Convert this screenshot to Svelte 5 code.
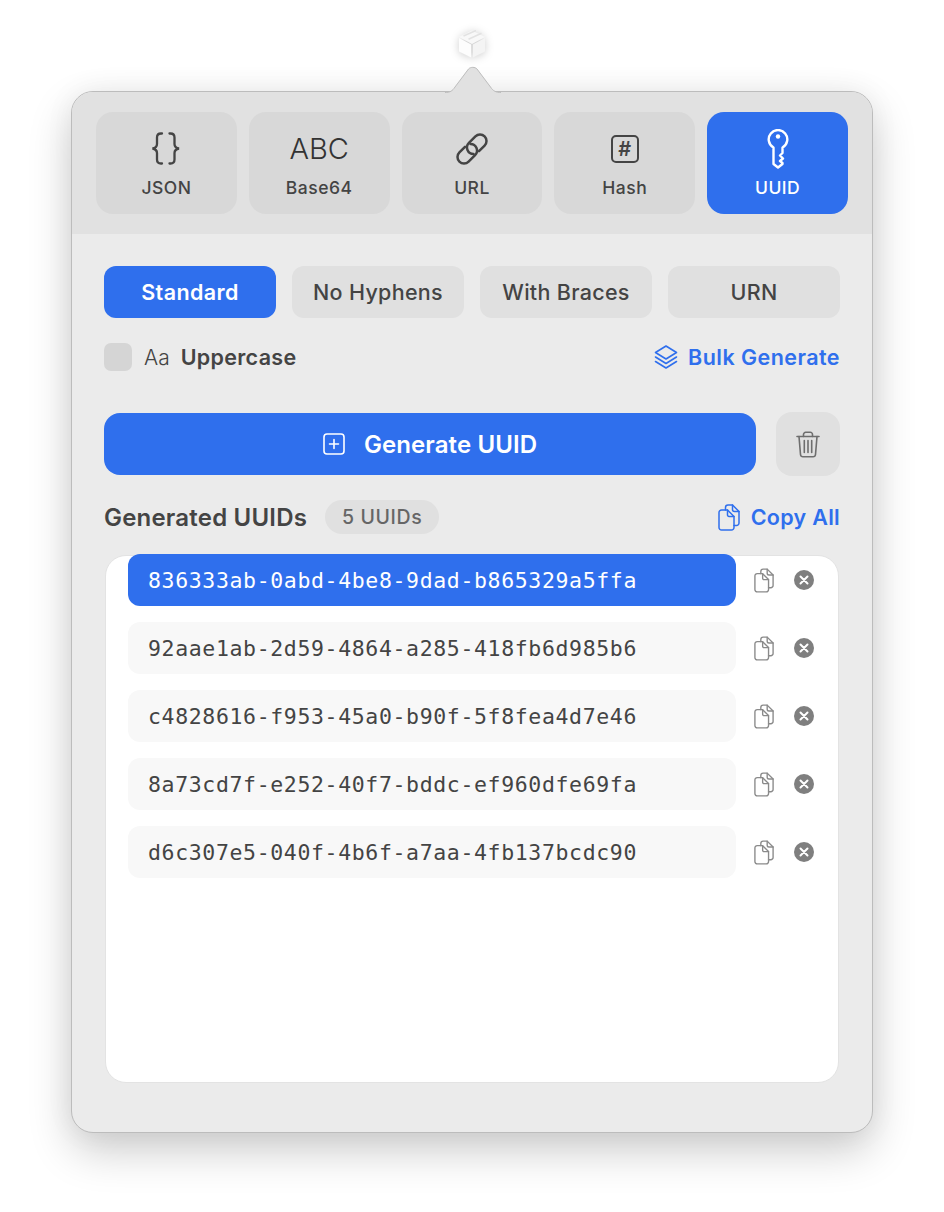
<script>
  const tabs = ['JSON', 'Base64', 'URL', 'Hash', 'UUID'];
  const formats = ['Standard', 'No Hyphens', 'With Braces', 'URN'];
  const uuids = [
    '836333ab-0abd-4be8-9dad-b865329a5ffa',
    '92aae1ab-2d59-4864-a285-418fb6d985b6',
    'c4828616-f953-45a0-b90f-5f8fea4d7e46',
    '8a73cd7f-e252-40f7-bddc-ef960dfe69fa',
    'd6c307e5-040f-4b6f-a7aa-4fb137bcdc90'
  ];
  let activeTab = 'UUID';
  let activeFormat = 'Standard';
  let selected = 0;
</script>

{#snippet copyIcon()}
  <svg class="copy-svg" viewBox="0 0 22 27" fill="none" stroke="currentColor" stroke-width="1.5" stroke-linejoin="round" stroke-linecap="round">
    <path d="M7.5 6V3.5A2.5 2.5 0 0 1 10 1h4.5L21 7.5V19a2.5 2.5 0 0 1-2.5 2.5H16" />
    <path d="M14.5 1v4.5a2 2 0 0 0 2 2H21" />
    <path d="M3.5 6h6L16 12.5v11a2.5 2.5 0 0 1-2.5 2.5h-10A2.5 2.5 0 0 1 1 23.5v-15A2.5 2.5 0 0 1 3.5 6Z" />
    <path d="M9.5 6v5a1.5 1.5 0 0 0 1.5 1.5h5" />
  </svg>
{/snippet}

<div class="page">
  <svg class="menu-icon" viewBox="0 0 28 28">
    <path d="M14 .5 27 7 14 14 1 7Z" fill="#f8f8f8" />
    <path d="M1 8 13.2 14.600V27.500L1 21.500Z" fill="#fdfdfd" />
    <path d="M27 8 14.800 14.600V27.500L27 21.500Z" fill="#f4f4f4" />
    <path d="M5.500 6 18 0.500M10.500 9.300 23.500 3.300" stroke="#e2e2e2" stroke-width="1.500" fill="none" />
  </svg>

  <div class="popover">
    <svg class="tail" viewBox="0 0 56 28">
      <path d="M0 26.500C5 26.500 7.500 25 10 21L23.500 3C25.500 .8 30 .8 32 3L45.500 21C48 25 51 26.500 56 26.500V28H0Z" fill="#e1e1e1" />
      <path d="M0 26.500C5 26.500 7.500 25 10 21L23.500 3C25.500 .8 30 .8 32 3L45.500 21C48 25 51 26.500 56 26.500" fill="none" stroke="#bdbdbd" stroke-width="1" />
    </svg>

    <div class="tabs">
      {#each tabs as tab}
        <div class="tab" class:active={tab === activeTab}>
          <div class="tab-icon">
            {#if tab === 'JSON'}
              <svg width="32" height="33" viewBox="0 0 32 33" fill="none" stroke="#444" stroke-width="2.3" stroke-linecap="round">
                <path d="M12 1.500h-1c-2.600 0-4 1.400-4 4v6.500c0 2.400-1.400 3.900-4.500 4.500 3.100.6 4.500 2.100 4.500 4.500v6.500c0 2.600 1.400 4 4 4h1" />
                <path d="M19.500 1.500h1c2.600 0 4 1.400 4 4v6.500c0 2.400 1.400 3.900 4.500 4.500-3.100.6-4.500 2.100-4.500 4.500v6.500c0 2.600-1.400 4-4 4h-1" />
              </svg>
            {:else if tab === 'Base64'}
              <span class="abc">ABC</span>
            {:else if tab === 'URL'}
              <svg width="34" height="34" viewBox="0 0 34 34" fill="none" stroke="#444" stroke-width="2.500" stroke-linecap="round">
                <path d="M24 19.200 29.600 13.600A6.500 6.500 0 0 0 20.400 4.400L13.900 10.900A6.500 6.500 0 0 0 18.500 22" />
                <path d="M10 14.800 4.400 20.400A6.500 6.500 0 0 0 13.600 29.600L20.100 23.100A6.500 6.500 0 0 0 15.500 12" />
              </svg>
            {:else if tab === 'Hash'}
              <span class="hash-box">#</span>
            {:else}
              <svg width="22" height="40" viewBox="0 0 22 40" fill="none" stroke="#fff" stroke-width="2.400" stroke-linejoin="round">
                <path d="M6.500 18.500A9.300 9.300 0 1 1 15.500 18.500V24L13 26.500 16 29.500 13 32 15.500 34V35L11 38.500 6.500 35Z" />
                <circle cx="11" cy="7.500" r="2.200" fill="#fff" stroke="none" />
              </svg>
            {/if}
          </div>
          <span class="tab-label">{tab}</span>
        </div>
      {/each}
    </div>

    <div class="content">
      <div class="formats">
        {#each formats as format}
          <div class="format" class:active={format === activeFormat}>{format}</div>
        {/each}
      </div>

      <div class="options">
        <div class="uppercase">
          <span class="checkbox"></span>
          <span class="aa">Aa</span>
          <span class="uppercase-label">Uppercase</span>
        </div>
        <div class="link-btn">
          <svg width="24" height="24" viewBox="0 0 24 24" fill="none" stroke="currentColor" stroke-width="1.600" stroke-linejoin="round" stroke-linecap="round">
            <path d="M12 1 22.500 7.500 12 14 1.500 7.500Z" />
            <path d="M1.500 12 12 18.500 22.500 12" />
            <path d="M1.500 16.500 12 23 22.500 16.500" />
          </svg>
          Bulk Generate
        </div>
      </div>

      <div class="actions">
        <div class="generate">
          <svg width="22" height="22" viewBox="0 0 22 22" fill="none" stroke="#fff" stroke-width="1.600" stroke-linecap="round">
            <rect x="1" y="1" width="20" height="20" rx="3" />
            <path d="M11 6.500v9M6.500 11h9" />
          </svg>
          Generate UUID
        </div>
        <div class="trash">
          <svg width="24" height="27" viewBox="0 0 24 27" fill="none" stroke="#6e6e6e" stroke-width="1.600" stroke-linecap="round" stroke-linejoin="round">
            <path d="M1 5.500h22" />
            <path d="M7.500 5.500V3.500A2.200 2.200 0 0 1 9.700 1.300h4.600a2.200 2.200 0 0 1 2.200 2.200v2" />
            <path d="M3 5.500 4.500 23.500A2.500 2.500 0 0 0 7 25.800h10a2.500 2.500 0 0 0 2.500-2.300L21 5.500" />
            <path d="M8.300 9.500v12M12 9.500v12M15.700 9.500v12" />
          </svg>
        </div>
      </div>

      <div class="list-header">
        <div class="list-title">
          <span class="title-text">Generated UUIDs</span>
          <span class="count">{uuids.length} UUIDs</span>
        </div>
        <div class="link-btn copy-all">
          {@render copyIcon()}
          Copy All
        </div>
      </div>

      <div class="list">
        {#each uuids as uuid, i}
          <div class="row">
            <div class="uuid" class:selected={i === selected}>{uuid}</div>
            <span class="row-copy">{@render copyIcon()}</span>
            <span class="row-remove">
              <svg width="20" height="20" viewBox="0 0 20 20">
                <circle cx="10" cy="10" r="10" fill="#7f7f7f" />
                <path d="M6.500 6.500l7 7M13.500 6.500l-7 7" stroke="#fff" stroke-width="2" stroke-linecap="round" />
              </svg>
            </span>
          </div>
        {/each}
      </div>
    </div>
  </div>
</div>

<style>
  :global(body) {
    margin: 0;
    background: #fff;
  }

  .page {
    height: 1212px;
    padding-top: 30px;
    box-sizing: border-box;
    display: flex;
    flex-direction: column;
    align-items: center;
    font-family: Inter, 'Noto Sans', sans-serif;
    color: #444;
    overflow: hidden;
  }

  .menu-icon {
    width: 28px;
    height: 28px;
    margin-bottom: 33px;
    filter: drop-shadow(0 1px 4px rgba(0, 0, 0, 0.2));
  }

  .popover {
    position: relative;
    width: 802px;
    height: 1042px;
    box-sizing: border-box;
    background: #ebebeb;
    border: 1px solid #bcbcbc;
    border-radius: 22px;
    box-shadow: 0 18px 44px rgba(0, 0, 0, 0.2), 0 0 30px rgba(0, 0, 0, 0.05);
  }

  .tail {
    position: absolute;
    top: -26px;
    left: 373px;
    width: 56px;
    height: 28px;
  }

  .tabs {
    display: grid;
    grid-template-columns: repeat(5, 1fr);
    gap: 12px;
    padding: 20px 24px;
    background: #e1e1e1;
    border-radius: 21px 21px 0 0;
  }

  .tab {
    height: 102px;
    box-sizing: border-box;
    background: #d8d8d8;
    border-radius: 17px;
    display: flex;
    flex-direction: column;
    align-items: center;
  }

  .tab.active {
    background: #2f6fed;
    color: #fff;
  }

  .tab-icon {
    height: 65px;
    display: flex;
    align-items: center;
    justify-content: center;
    padding-top: 8px;
    box-sizing: border-box;
  }

  .abc {
    font-size: 29px;
    font-weight: 300;
    color: #333;
  }

  .hash-box {
    width: 24px;
    height: 24px;
    border: 2.400px solid #444;
    border-radius: 5px;
    display: flex;
    align-items: center;
    justify-content: center;
    font-size: 20px;
    font-weight: 600;
  }

  .tab-label {
    font-size: 17.500px;
    font-weight: 500;
    letter-spacing: 0.5px;
  }

  .content {
    padding: 32px 32px 0;
  }

  .formats {
    display: grid;
    grid-template-columns: repeat(4, 1fr);
    gap: 16px;
  }

  .format {
    height: 52px;
    background: #e0e0e0;
    border-radius: 12px;
    display: flex;
    align-items: center;
    justify-content: center;
    font-size: 21.500px;
    font-weight: 500;
    letter-spacing: 0.3px;
  }

  .format.active {
    background: #2f6fed;
    color: #fff;
    font-weight: 600;
    letter-spacing: 0.4px;
  }

  .options {
    display: flex;
    align-items: center;
    justify-content: space-between;
    margin-top: 25px;
    height: 28px;
  }

  .uppercase {
    display: flex;
    align-items: center;
  }

  .checkbox {
    width: 28px;
    height: 28px;
    border-radius: 7px;
    background: #d5d5d5;
    margin-right: 12px;
  }

  .aa {
    font-size: 21px;
    font-weight: 300;
    margin-right: 11px;
  }

  .uppercase-label {
    font-size: 21.500px;
    font-weight: 600;
    letter-spacing: 0.3px;
  }

  .link-btn {
    display: flex;
    align-items: center;
    gap: 10px;
    color: #2f6fed;
    font-size: 21.500px;
    font-weight: 600;
    letter-spacing: 0.45px;
  }

  .copy-all {
    gap: 11px;
    letter-spacing: 0.3px;
  }

  .actions {
    display: flex;
    gap: 20px;
    align-items: center;
    margin-top: 41px;
  }

  .generate {
    flex: 1;
    height: 62px;
    background: #2f6fed;
    border-radius: 16px;
    display: flex;
    align-items: center;
    justify-content: center;
    gap: 19px;
    color: #fff;
    font-size: 24px;
    font-weight: 600;
    letter-spacing: 0.1px;
  }

  .trash {
    width: 64px;
    height: 64px;
    background: #e0e0e0;
    border-radius: 16px;
    display: flex;
    align-items: center;
    justify-content: center;
  }

  .list-header {
    display: flex;
    align-items: center;
    justify-content: space-between;
    margin-top: 24px;
    height: 34px;
  }

  .list-title {
    display: flex;
    align-items: center;
    gap: 18px;
    font-size: 24px;
    font-weight: 600;
  }

  .title-text {
    letter-spacing: 0.2px;
  }

  .count {
    height: 34px;
    padding: 0 17px;
    border-radius: 17px;
    background: #e0e0e0;
    display: flex;
    align-items: center;
    font-size: 19.500px;
    font-weight: 500;
    letter-spacing: 0.6px;
    color: #666;
  }

  .copy-svg {
    width: 22px;
    height: 27px;
    display: block;
  }

  .list {
    margin: 21px 1px 0;
    height: 528px;
    box-sizing: border-box;
    background: #fff;
    border: 1px solid #e3e3e3;
    border-radius: 21px;
    padding: 0 22px;
    display: flex;
    flex-direction: column;
    gap: 16px;
  }

  .row {
    display: flex;
    align-items: center;
    height: 52px;
    flex: none;
  }

  .row:first-child {
    margin-top: -2px;
  }

  .uuid {
    width: 608px;
    height: 52px;
    flex: none;
    box-sizing: border-box;
    padding-left: 20px;
    border-radius: 12px;
    background: #f8f8f8;
    display: flex;
    align-items: center;
    font-family: 'DejaVu Sans Mono', 'Liberation Mono', monospace;
    font-size: 21.500px;
    letter-spacing: 0.640px;
  }

  .uuid.selected {
    background: #2f6fed;
    color: #fff;
  }

  .row-copy {
    margin-left: 18px;
    color: #8a8a8a;
  }

  .row-copy .copy-svg {
    width: 20px;
    height: 25px;
  }

  .row-remove {
    margin-left: 20px;
    height: 20px;
  }
</style>
